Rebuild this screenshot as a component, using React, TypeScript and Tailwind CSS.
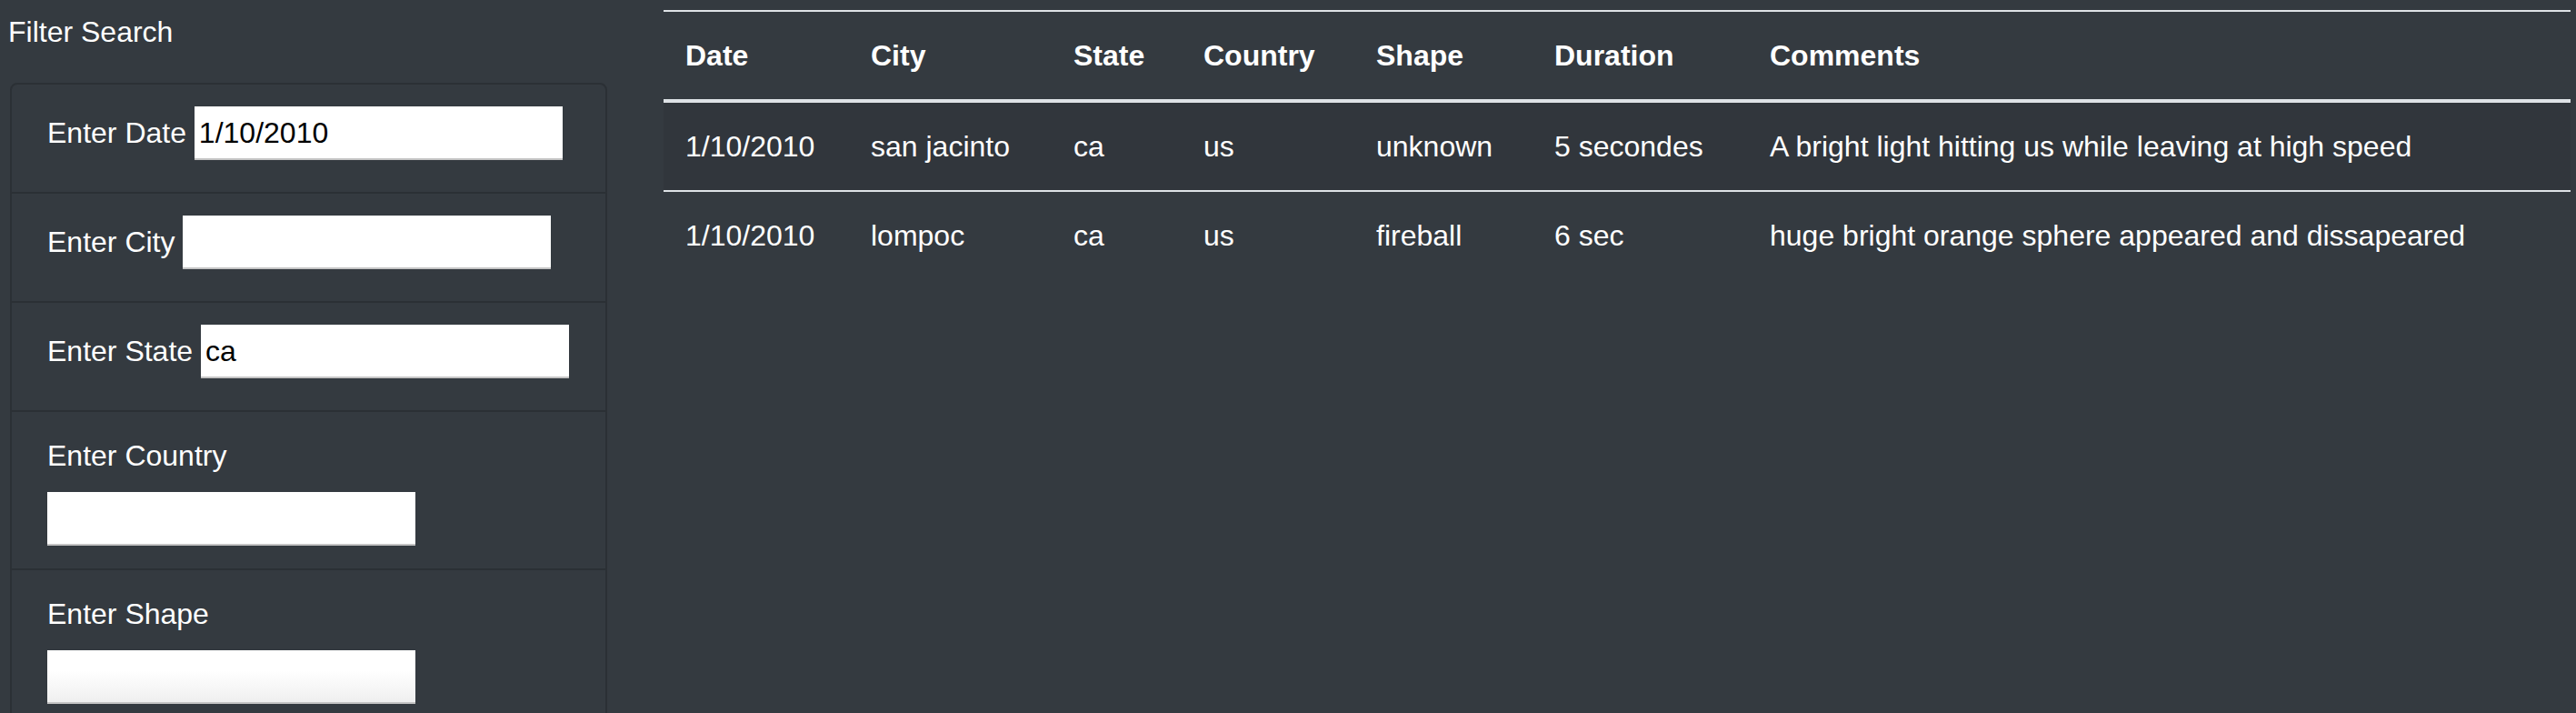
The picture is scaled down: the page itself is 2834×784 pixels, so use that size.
import React from "react";

type Filter = {
  label: string;
  value: string;
  stacked?: boolean;
  fade?: boolean;
};

const FILTERS: Filter[] = [
  { label: "Enter Date", value: "1/10/2010" },
  { label: "Enter City", value: "" },
  { label: "Enter State", value: "ca" },
  { label: "Enter Country", value: "", stacked: true },
  { label: "Enter Shape", value: "", stacked: true, fade: true },
];

const COLUMNS = [
  { title: "Date", width: "w-[204px]" },
  { title: "City", width: "w-[223px]" },
  { title: "State", width: "w-[143px]" },
  { title: "Country", width: "w-[190px]" },
  { title: "Shape", width: "w-[196px]" },
  { title: "Duration", width: "w-[237px]" },
  { title: "Comments", width: "" },
];

const SIGHTINGS = [
  {
    date: "1/10/2010",
    city: "san jacinto",
    state: "ca",
    country: "us",
    shape: "unknown",
    duration: "5 secondes",
    comments: "A bright light hitting us while leaving at high speed",
  },
  {
    date: "1/10/2010",
    city: "lompoc",
    state: "ca",
    country: "us",
    shape: "fireball",
    duration: "6 sec",
    comments: "huge bright orange sphere appeared and dissapeared",
  },
];

function FilterItem({ filter, first }: { filter: Filter; first: boolean }) {
  const inputClass =
    "h-[59px] w-[405px] border-0 border-b-2 border-[#c4c4c4] px-[5px] pt-[2px] text-[32px] text-black outline-none " +
    (filter.fade ? "bg-linear-to-b from-white from-40% to-[#efefef]" : "bg-white");

  return (
    <li
      className={`pl-[39px] pr-[40px] pt-[24px] pb-[25px] ${first ? "" : "border-t-2 border-[#2b3035]"} ${
        filter.stacked ? "" : "whitespace-nowrap"
      }`}
    >
      <label className="mb-[16px] inline-block">{filter.label}</label>
      {filter.stacked ? (
        <input className={`block ${inputClass}`} defaultValue={filter.value} readOnly />
      ) : (
        <>
          {" "}
          <input className={`inline-block ${inputClass}`} defaultValue={filter.value} readOnly />
        </>
      )}
    </li>
  );
}

export default function App() {
  return (
    <div className="flex min-h-screen overflow-hidden bg-[#343a40] font-['Liberation_Sans',Arial,sans-serif] text-[32px] leading-[48px] text-white">
      <aside className="w-[668px] shrink-0 pl-[9px]">
        <h2 className="pt-[11px] font-normal">Filter Search</h2>
        <ul className="ml-[2px] mt-[32px] rounded-[8px] border-2 border-[#2b3035]">
          {FILTERS.map((f, i) => (
            <FilterItem key={f.label} filter={f} first={i === 0} />
          ))}
        </ul>
      </aside>

      <main className="ml-[62px] mr-[6px] flex-1 pt-[11px]">
        <table className="w-full table-fixed border-collapse">
          <thead>
            <tr>
              {COLUMNS.map((c) => (
                <th
                  key={c.title}
                  className={`${c.width} border-t-2 border-b-4 border-[#dee2e6] px-[24px] py-[24px] text-left font-bold`}
                >
                  {c.title}
                </th>
              ))}
            </tr>
          </thead>
          <tbody>
            {SIGHTINGS.map((s, i) => (
              <tr key={i} className={i % 2 === 0 ? "bg-[#31363c]" : ""}>
                {[s.date, s.city, s.state, s.country, s.shape, s.duration, s.comments].map((v, j) => (
                  <td key={j} className="border-t-2 border-[#dee2e6] px-[24px] py-[24px] font-normal">
                    {v}
                  </td>
                ))}
              </tr>
            ))}
          </tbody>
        </table>
      </main>
    </div>
  );
}
